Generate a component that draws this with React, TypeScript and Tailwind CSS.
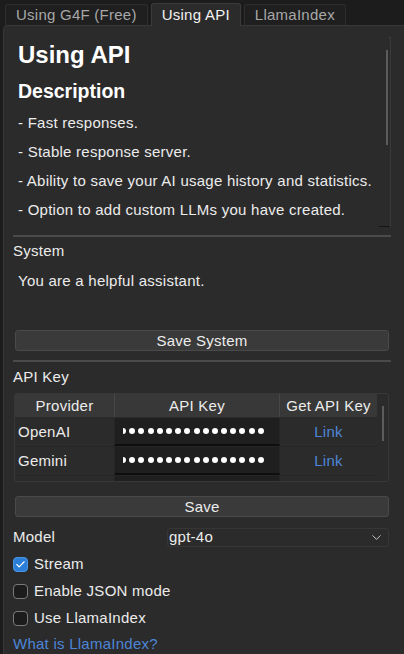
import { ChevronDown, Check } from "lucide-react";

const bullets = [
  "- Fast responses.",
  "- Stable response server.",
  "- Ability to save your AI usage history and statistics.",
  "- Option to add custom LLMs you have created.",
];

const providers = [
  { name: "OpenAI" },
  { name: "Gemini" },
  { name: "Claude" },
];

const Tab = ({ label, active }: { label: string; active?: boolean }) => (
  <div
    className={
      active
        ? "h-[23px] -mb-px px-[10px] flex items-center border border-b-0 border-[#3a3a3a] rounded-t-[3px] bg-[#2b2b2b] text-[#f2f2f2] z-10"
        : "h-[21px] mt-[1px] px-[10px] flex items-center border border-b-0 border-[#2e2e2e] rounded-t-[3px] bg-[#1f1f1f] text-[#a8a8a8]"
    }
  >
    {label}
  </div>
);

const Dots = () => (
  <div className="flex-1 overflow-hidden">
    <div className="flex items-center gap-[3.2px] -ml-[3px]">
      {Array.from({ length: 16 }).map((_, i) => (
        <span key={i} className="w-[6px] h-[6px] rounded-full bg-white shrink-0" />
      ))}
    </div>
  </div>
);

const CheckRow = ({ label, checked }: { label: string; checked?: boolean }) => (
  <div className="h-[27px] flex items-center gap-[6px]">
    {checked ? (
      <span className="w-[15px] h-[15px] rounded-[4px] bg-[#2b7fd8] border border-[#4a95e6] flex items-center justify-center">
        <Check size={11} strokeWidth={2.5} className="text-white" />
      </span>
    ) : (
      <span className="w-[15px] h-[15px] rounded-[4px] bg-[#1c1c1c] border border-[#7a7a7a]" />
    )}
    <span>{label}</span>
  </div>
);

export default function App() {
  return (
    <div className="w-[404px] h-[654px] overflow-hidden bg-[#1c1c1c] text-[15px] tracking-[0.25px] text-[#ececec] font-['Liberation_Sans',Arial,sans-serif] pt-[3px]">
      <div className="flex items-end gap-[3px] pl-[5px] h-[22px]">
        <Tab label="Using G4F (Free)" />
        <Tab label="Using API" active />
        <Tab label="LlamaIndex" />
      </div>

      <div className="ml-[3px] h-[640px] bg-[#2b2b2b] border-l border-t border-[#383838] rounded-tl-[5px] pl-[9px] pr-[13px] pt-[11px] flex flex-col">
        {/* description scroll area */}
        <div className="flex h-[190px]">
          <div className="flex-1 pl-[5px] pt-[4px]">
            <div className="text-[24px] font-bold leading-[28px] text-white tracking-normal">Using API</div>
            <div className="text-[19.5px] font-bold leading-[24px] mt-[10px] text-white tracking-normal">Description</div>
            <div className="mt-[5px] flex flex-col">
              {bullets.map((b) => (
                <div key={b} className="h-[29px] leading-[29px] whitespace-nowrap">{b}</div>
              ))}
            </div>
          </div>
          <div className="w-[10px] flex">
            <div className="w-[7px] pt-[13px] flex justify-end">
              <div className="w-[2px] h-[95px] bg-[#5c5c5c]" />
            </div>
            <div className="w-[3px] border-t border-r border-[#3a3a3a] relative">
              <div className="absolute bottom-0 right-0 w-[11px] h-px bg-[#151515]" />
            </div>
          </div>
        </div>

        <div className="h-[2px] bg-[#4a4a4a] mt-[8px]" />

        {/* system */}
        <div className="leading-[18px] mt-[5px]">System</div>
        <div className="pl-[5px] mt-[12px] leading-[18px] h-[58px]">You are a helpful assistant.</div>
        <button className="ml-[2px] mr-[2px] h-[21px] rounded-[3px] bg-[#3a3a3a] border border-[#4a4a4a] text-[#ececec] leading-[19px]">
          Save System
        </button>

        <div className="h-[2px] bg-[#4a4a4a] mt-[9px]" />

        {/* api keys */}
        <div className="leading-[18px] mt-[6px]">API Key</div>
        <div className="mt-[7px] ml-[1px] mr-[2px] h-[89px] flex border border-[#383838] rounded-[3px] overflow-hidden">
          <div className="flex-1 flex flex-col overflow-hidden">
            <div className="flex h-[24px] shrink-0 bg-[#383838] border-b border-[#2a2a2a]">
              <div className="w-[100px] text-center leading-[24px] border-r border-[#474747]">Provider</div>
              <div className="w-[165px] text-center leading-[24px] border-r border-[#474747]">API Key</div>
              <div className="flex-1 text-center leading-[24px] whitespace-nowrap">Get API Key</div>
            </div>
            {providers.map((p) => (
              <div key={p.name} className="flex h-[29px] shrink-0 border-b border-[#252525]">
                <div className="w-[100px] pl-[3px] leading-[28px] border-r border-[#252525]">{p.name}</div>
                <div className="w-[165px] bg-[#1f1f1f] border-b-2 border-r border-b-[#0e0e0e] border-r-[#252525] flex items-center pl-[8px] pr-[10px]">
                  <Dots />
                </div>
                <div className="flex-1 text-center leading-[28px] text-[#4d86d8]">Link</div>
              </div>
            ))}
          </div>
          <div className="w-[11px] flex justify-center pt-[12px]">
            <div className="w-[2px] h-[35px] bg-[#5c5c5c]" />
          </div>
        </div>
        <button className="mt-[14px] ml-[2px] mr-[2px] h-[21px] rounded-[3px] bg-[#3a3a3a] border border-[#4a4a4a] text-[#ececec] leading-[19px]">
          Save
        </button>

        {/* model */}
        <div className="flex items-center mt-[11px] h-[19px]">
          <div className="w-[154px]">Model</div>
          <div className="flex-1 mr-[2px] h-[19px] flex items-center justify-between border border-[#363636] rounded-[3px] pl-[1px] pr-[4px]">
            <span>gpt-4o</span>
            <ChevronDown size={15} strokeWidth={1.5} className="text-[#d0d0d0]" />
          </div>
        </div>

        <div className="mt-[4px] flex flex-col">
          <CheckRow label="Stream" checked />
          <CheckRow label="Enable JSON mode" />
          <CheckRow label="Use LlamaIndex" />
        </div>
        <div className="text-[#4d86d8] leading-[22px] mt-[1px]">What is LlamaIndex?</div>
      </div>
    </div>
  );
}
